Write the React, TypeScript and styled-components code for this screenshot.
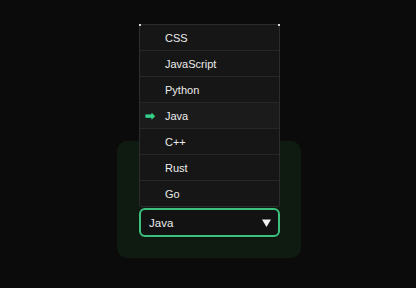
import styled, { createGlobalStyle } from "styled-components";

const options = ["CSS", "JavaScript", "Python", "Java", "C++", "Rust", "Go"];
const selected = "Java";

const GlobalStyle = createGlobalStyle`
  html, body {
    margin: 0;
    padding: 0;
    background: #0b0b0b;
    font-family: "Liberation Sans", Arial, sans-serif;
  }
`;

const Page = styled.div`
  width: 416px;
  height: 288px;
  display: flex;
  justify-content: center;
  padding: 141px 0 0 2px;
  box-sizing: border-box;
`;

const Card = styled.div`
  width: 184px;
  height: 117px;
  box-sizing: border-box;
  padding: 67px 21px 0 22px;
  background: #0f1a10;
  border-radius: 10px;
`;

const Field = styled.div`
  position: relative;
`;

// open popup, sits above the trigger
const Listbox = styled.ul`
  position: absolute;
  bottom: calc(100% + 1px);
  left: 0;
  right: 0;
  margin: 0;
  padding: 0;
  list-style: none;
  background: #161616;
  border: 1px solid #2c2c2c;
  box-sizing: border-box;
  border-radius: 2px;

  &::before,
  &::after {
    content: "";
    position: absolute;
    top: -1px;
    width: 2px;
    height: 2px;
    background: #d8d8d8;
  }
  &::before {
    left: -1px;
  }
  &::after {
    right: -1px;
  }
`;

const Option = styled.li<{ $active: boolean }>`
  height: 26px;
  display: flex;
  align-items: center;
  padding-left: 25px;
  position: relative;
  color: #ececec;
  font-size: 11px;
  background: ${(p) => (p.$active ? "#1b1b1b" : "transparent")};
  border-top: 1px solid #262626;
  box-sizing: border-box;

  &:first-child {
    border-top: none;
    height: 25px;
  }
`;

const Marker = styled.span`
  position: absolute;
  left: 5px;
  color: #35d18a;
  font-size: 12px;
  font-weight: bold;
`;

const SelectBox = styled.div`
  height: 29px;
  box-sizing: border-box;
  border: 2px solid #3cc07e;
  border-radius: 6px;
  background: #121212;
  display: flex;
  align-items: center;
  justify-content: space-between;
  padding: 0 7px 0 8px;
  color: #ececec;
  font-size: 11.5px;
`;

const Caret = styled.svg`
  width: 9px;
  height: 8px;
  display: block;
`;

export default function App() {
  return (
    <>
      <GlobalStyle />
      <Page>
        <Card>
          <Field>
            <Listbox role="listbox">
              {options.map((o) => (
                <Option key={o} $active={o === selected} aria-selected={o === selected}>
                  {o === selected && <Marker>➡</Marker>}
                  {o}
                </Option>
              ))}
            </Listbox>
            <SelectBox>
              <span>{selected}</span>
              <Caret viewBox="0 0 9 8">
                <path d="M0 0.5 H9 L4.5 8 Z" fill="#f2f2f2" />
              </Caret>
            </SelectBox>
          </Field>
        </Card>
      </Page>
    </>
  );
}
